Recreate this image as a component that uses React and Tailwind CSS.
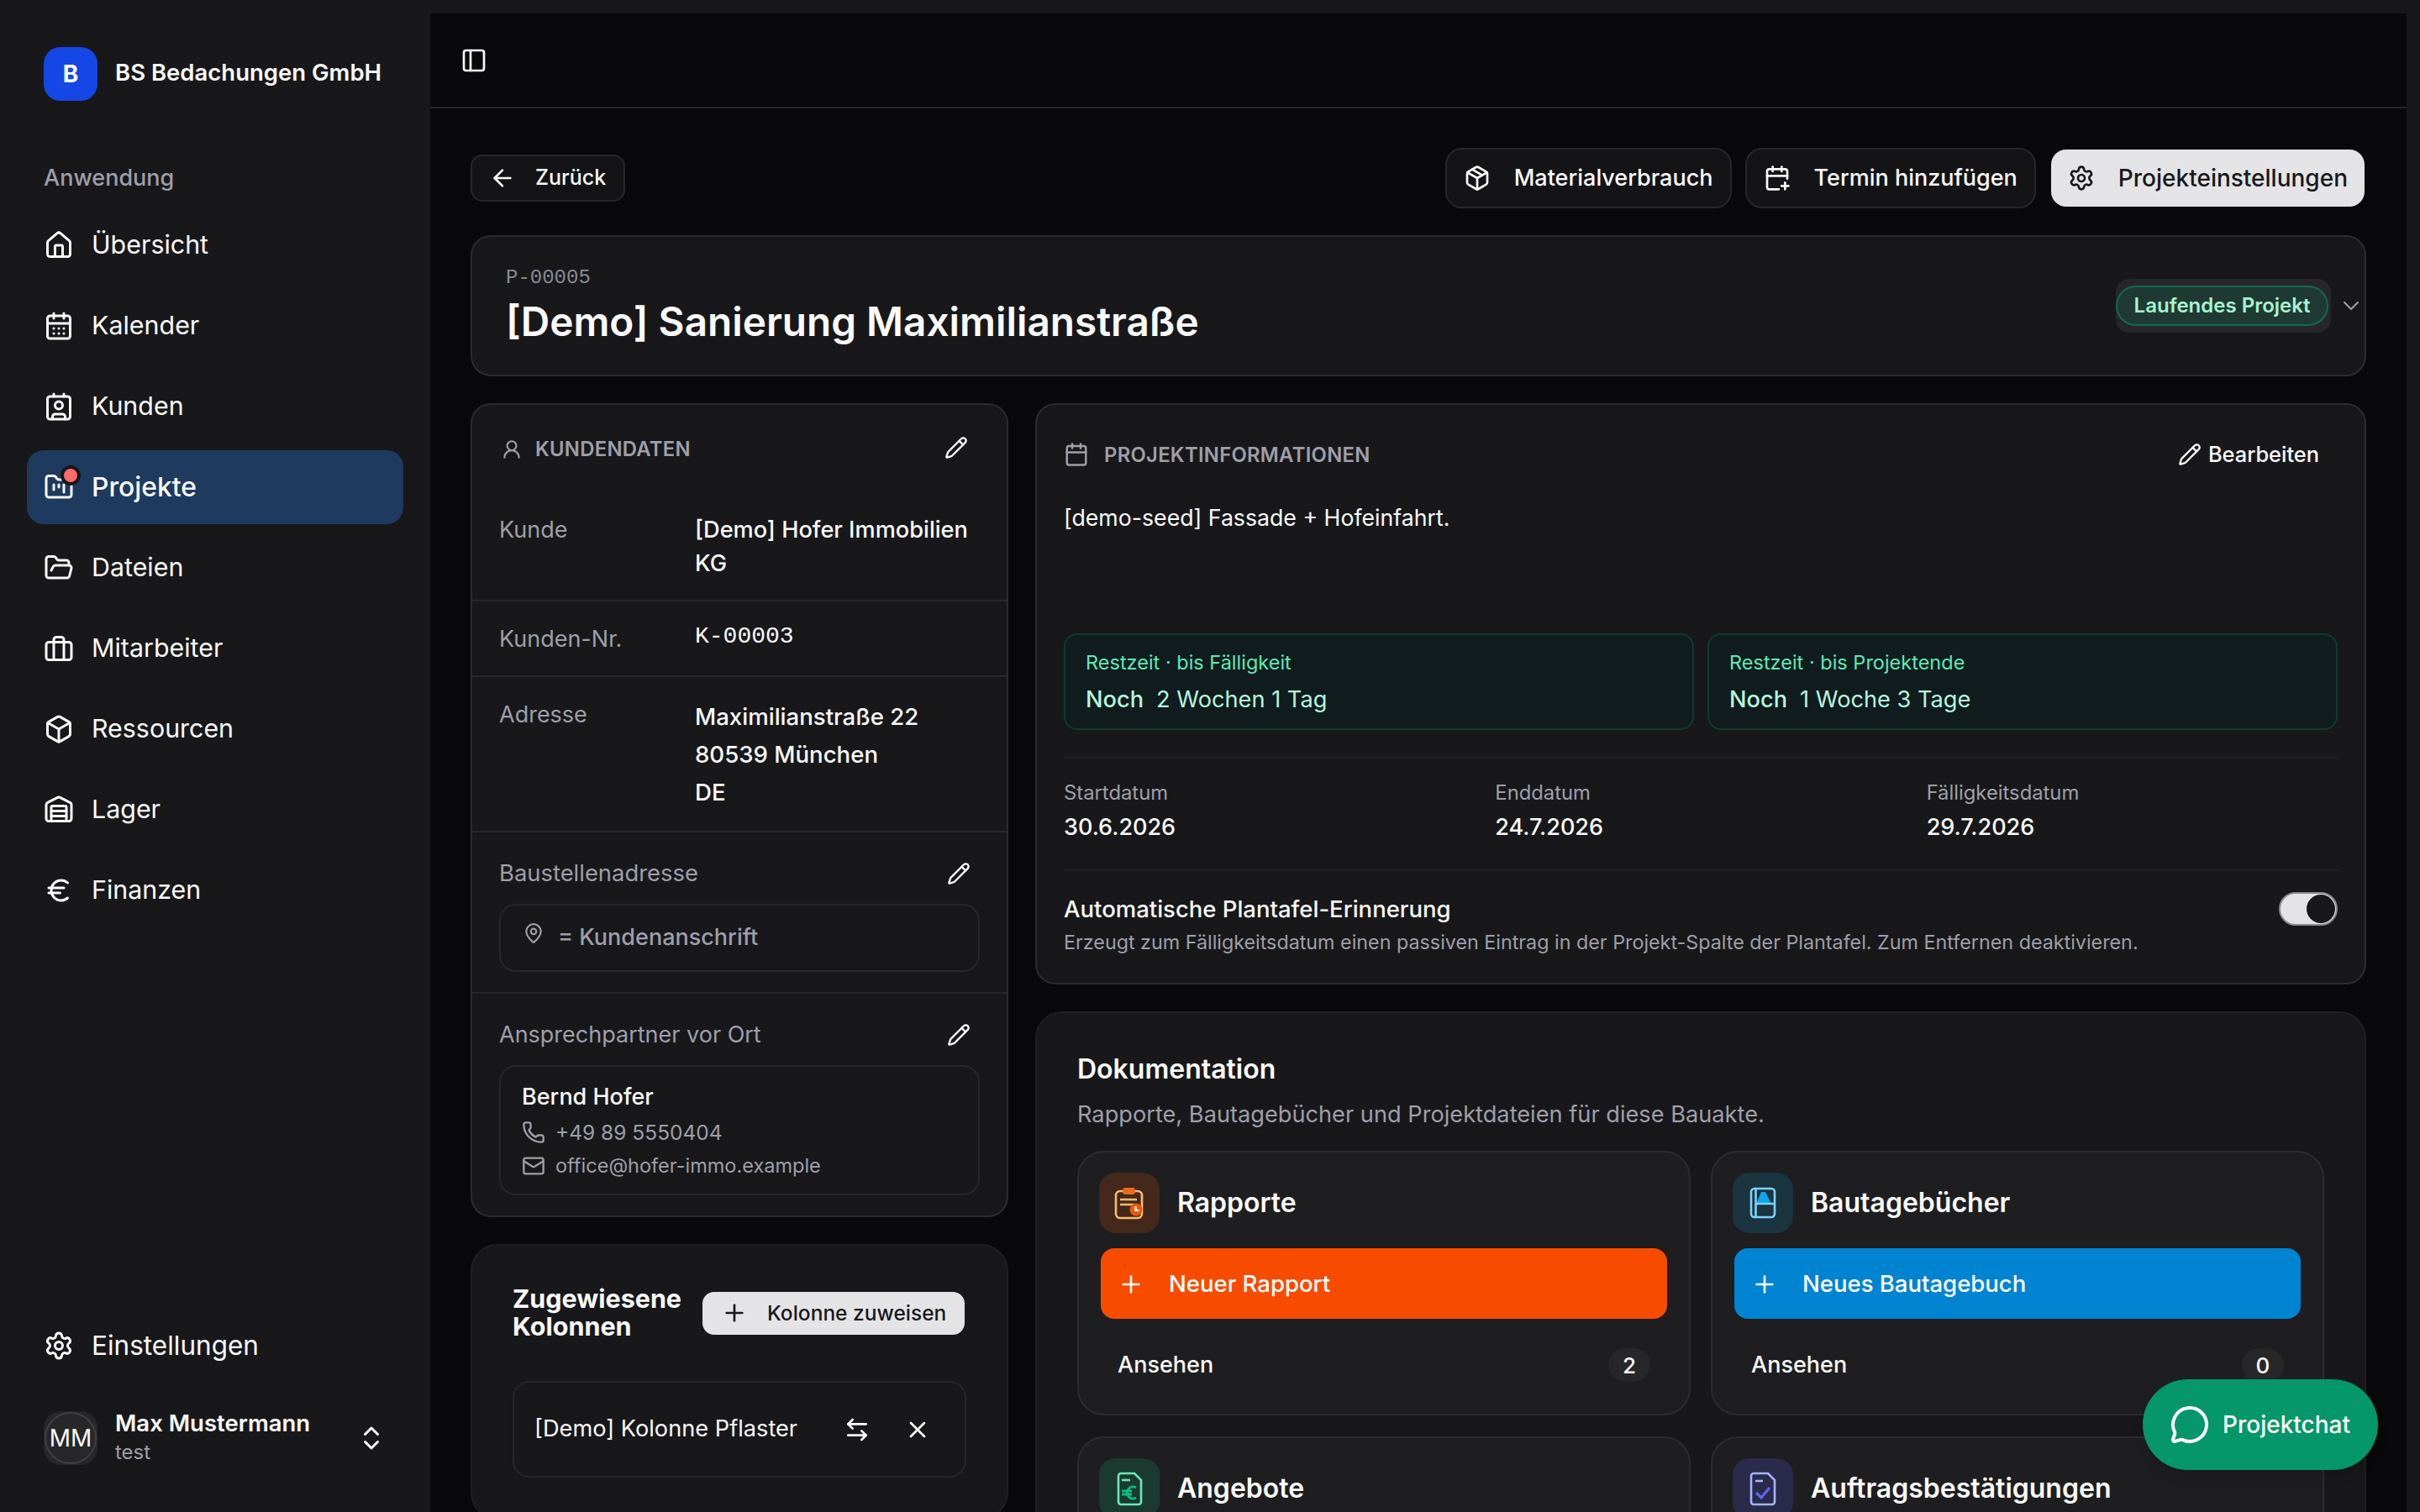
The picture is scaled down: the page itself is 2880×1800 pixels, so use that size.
import {
  ArrowLeft, ArrowLeftRight, Box, Calendar, CalendarDays, CalendarPlus, ChevronDown, ChevronsUpDown,
  Contact, Euro, FolderKanban, FolderOpen, House, Mail, MapPin, MessageCircle, Package, PanelLeft,
  Pencil, Phone, Plus, Settings, UserRound, Warehouse, X,
} from "lucide-react";

function Staff({ size = 36 }) {
  return (
    <svg width={size} height={size} viewBox="0 0 24 24" fill="none" stroke="currentColor" strokeWidth="2" strokeLinecap="round" strokeLinejoin="round">
      <rect x="2" y="7" width="20" height="14" rx="2" />
      <path d="M16 21V5a2 2 0 0 0-2-2h-4a2 2 0 0 0-2 2v16" />
    </svg>
  );
}

const NAV = [
  { label: "Übersicht", icon: House },
  { label: "Kalender", icon: CalendarDays },
  { label: "Kunden", icon: Contact },
  { label: "Projekte", icon: FolderKanban, active: true },
  { label: "Dateien", icon: FolderOpen },
  { label: "Mitarbeiter", icon: Staff },
  { label: "Ressourcen", icon: Box },
  { label: "Lager", icon: Warehouse },
  { label: "Finanzen", icon: Euro },
];

function NavItem({ label, icon: Icon, active, textSize = "text-[30.4px]" }) {
  return (
    <div className={`flex h-[88px] items-center gap-[21px] rounded-[20px] pl-[20px] text-[#fafafa] ${active ? "bg-[#1e3a5f] text-[31.8px] font-medium" : textSize}`}>
      <span className="relative flex">
        <Icon size={36} />
        {active && <span className="absolute -top-[8px] left-[20px] box-content h-4 w-4 rounded-full border-[4px] border-[#18181b] bg-[#f96a6a]" />}
      </span>
      {label}
    </div>
  );
}

function Sidebar() {
  return (
    <aside className="flex h-full w-[512px] shrink-0 flex-col">
      <div className="flex items-center gap-[21px] pl-[52px] pt-[56px]">
        <div className="flex h-16 w-16 items-center justify-center rounded-[20px] bg-[#1447e6] text-[28px] font-bold text-white">B</div>
        <div className="-mt-[2px] text-[27.5px] font-semibold text-[#fafafa]">BS Bedachungen GmbH</div>
      </div>
      <div className="mt-[76px] h-8 pl-[52px] text-[27px] font-medium leading-8 text-[#9f9fa9]">Anwendung</div>
      <nav className="mt-[20px] flex flex-col gap-2 px-8">
        {NAV.map((n) => (
          <NavItem key={n.label} {...n} />
        ))}
      </nav>
      <div className="mt-auto px-8">
        <NavItem label="Einstellungen" icon={Settings} textSize="text-[31.5px]" />
      </div>
      <div className="mb-[56px] mt-[34px] flex h-16 items-center pl-[52px] pr-[52px]">
        <div className="flex h-16 w-16 items-center justify-center rounded-[20px] bg-[#27272a]">
          <div className="flex h-[62px] w-[62px] items-center justify-center rounded-full border-2 border-[#3f3f46] text-[28px] text-[#fafafa]">MM</div>
        </div>
        <div className="ml-[21px] flex-1 pb-[1px]">
          <div className="-mt-[2px] mb-[1px] text-[27.5px] font-semibold leading-[36px] text-[#fafafa]">Max Mustermann</div>
          <div className="text-[24px] leading-[32px] text-[#9f9fa9]">test</div>
        </div>
        <ChevronsUpDown size={36} className="text-[#fafafa]" />
      </div>
    </aside>
  );
}

function TopButton({ icon: Icon, children, light }) {
  return (
    <button className={`flex h-[72px] items-center gap-[28px] rounded-[20px] border-2 px-[20px] font-medium ${light ? "border-transparent bg-[#e4e4e7] bg-clip-padding text-[28px] text-[#18181b]" : "border-[#27272a] bg-[#141416] text-[27px] text-[#fafafa]"}`}>
      <Icon size={32} />
      {children}
    </button>
  );
}

function Row({ label, children }) {
  return (
    <div className="flex border-b-2 border-[#27272a] px-8 pb-[23px] pt-[25px]">
      <div className="w-[233px] shrink-0 text-[27px] leading-10 text-[#9f9fa9]">{label}</div>
      <div className="flex-1 text-[27.2px] font-medium leading-10 text-[#fafafa]">{children}</div>
    </div>
  );
}

function CustomerCard() {
  return (
    <section className="rounded-[24px] border-2 border-[#2c2c30] bg-[#18181b]">
      <div className="flex h-[104px] items-center px-[34px] pt-[1px]">
        <UserRound size={26} className="text-[#9f9fa9]" />
        <span className="ml-[15px] text-[23.8px] font-semibold uppercase tracking-[0.3px] text-[#9f9fa9]">Kundendaten</span>
        <Pencil size={28} className="-mt-[3px] ml-auto mr-[12px] text-[#fafafa]" />
      </div>
      <Row label="Kunde">[Demo] Hofer Immobilien KG</Row>
      <Row label="Kunden-Nr.">
        <div className="-mt-[3px] h-10 font-['Liberation_Mono',monospace] text-[28px] font-normal">K-00003</div>
      </Row>
      <Row label="Adresse">
        <div className="text-[27.6px] leading-[45px]">
          Maximilianstraße 22
          <br />
          80539 München
          <br />
          DE
        </div>
      </Row>
      <div className="border-b-2 border-[#27272a] px-8 pb-6 pt-[29px]">
        <div className="flex h-10 items-center justify-between pr-[11px] text-[27.4px] text-[#9f9fa9]">
          Baustellenadresse
          <Pencil size={28} className="text-[#fafafa]" />
        </div>
        <div className="mt-4 flex h-[81px] items-center gap-[16px] rounded-[20px] border-2 border-[#27272a] pl-[26px] text-[27px] font-medium text-[#9f9fa9]">
          <MapPin size={26} className="-mt-[12px]" />
          = Kundenanschrift
        </div>
      </div>
      <div className="px-8 pb-6 pt-[29px]">
        <div className="flex h-10 items-center justify-between pr-[11px] text-[27px] text-[#9f9fa9]">
          Ansprechpartner vor Ort
          <Pencil size={28} className="text-[#fafafa]" />
        </div>
        <div className="mt-4 h-[155px] rounded-[20px] border-2 border-[#27272a] pl-[25px] pt-[16px]">
          <div className="text-[27px] font-medium leading-10 text-[#fafafa]">Bernd Hofer</div>
          <div className="mt-[2px] flex h-[40px] items-center gap-[12px] text-[24.5px] text-[#9f9fa9]">
            <Phone size={28} />
            +49 89 5550404
          </div>
          <div className="flex h-[40px] items-center gap-[12px] text-[23.5px] text-[#9f9fa9]">
            <Mail size={28} />
            office@hofer-immo.example
          </div>
        </div>
      </div>
    </section>
  );
}

function ColumnsCard() {
  return (
    <section className="mt-8 rounded-[32px] border-2 border-[#1f1f22] bg-[#18181b] px-[48px] pb-12 pt-[46px]">
      <div className="flex items-center justify-between">
        <h3 className="w-[210px] text-[30.5px] font-bold leading-[33px] text-[#fafafa]">Zugewiesene Kolonnen</h3>
        <button className="mr-[2px] mt-[2px] flex h-[51px] w-[312px] items-center gap-[23px] rounded-[14px] bg-[#e4e4e7] pl-[22px] text-[24.5px] font-medium text-[#18181b]">
          <Plus size={32} />
          Kolonne zuweisen
        </button>
      </div>
      <div className="mt-[49px] flex h-[115px] items-center rounded-[20px] border-2 border-[#27272a] pl-[24px] pr-[40px] text-[27.2px] text-[#fafafa]">
        <span>[Demo] Kolonne Pflaster</span>
        <ArrowLeftRight size={32} className="ml-auto" />
        <X size={32} className="ml-[40px]" />
      </div>
    </section>
  );
}

function Countdown({ label, value }) {
  return (
    <div className="h-[115px] rounded-[16px] border-2 border-[#0e3b30] bg-[#111c1e] pl-[24px] pt-[15px]">
      <div className="text-[23.5px] leading-9 text-[#5ee9b5]">{label}</div>
      <div className="mt-[6px] text-[27.2px] leading-10 text-[#b6f5dc]">
        <span className="font-medium">Noch</span>
        <span className="ml-[15px]">{value}</span>
      </div>
    </div>
  );
}

function DateCol({ label, value }) {
  return (
    <div>
      <div className="text-[23.8px] leading-9 text-[#9f9fa9]">{label}</div>
      <div className="mt-[3px] text-[27px] font-medium leading-10 text-[#fafafa]">{value}</div>
    </div>
  );
}

function InfoCard() {
  return (
    <section className="h-[692px] rounded-[24px] border-2 border-[#2c2c30] bg-[#18181b] px-[32px] pt-[39px]">
      <div className="flex h-10 items-center">
        <Calendar size={30} className="text-[#9f9fa9]" />
        <span className="ml-[18px] mt-[2px] text-[23.8px] font-semibold uppercase tracking-[0.3px] text-[#9f9fa9]">Projektinformationen</span>
        <div className="ml-auto mr-[22px] flex items-center gap-[8px] text-[25.4px] font-medium text-[#fafafa]">
          <Pencil size={28} />
          Bearbeiten
        </div>
      </div>
      <p className="mt-[35px] h-[158px] text-[26.7px] leading-10 text-[#fafafa]">[demo-seed] Fassade + Hofeinfahrt.</p>
      <div className="grid grid-cols-2 gap-4">
        <Countdown label="Restzeit · bis Fälligkeit" value="2 Wochen 1 Tag" />
        <Countdown label="Restzeit · bis Projektende" value="1 Woche 3 Tage" />
      </div>
      <div className="mt-[32px] grid grid-cols-3 gap-6 border-y-2 border-[#222225] pb-[30px] pt-[23px]">
        <DateCol label="Startdatum" value="30.6.2026" />
        <DateCol label="Enddatum" value="24.7.2026" />
        <DateCol label="Fälligkeitsdatum" value="29.7.2026" />
      </div>
      <div className="mt-[25px] flex items-start justify-between">
        <div>
          <div className="text-[27.5px] font-medium leading-10 text-[#fafafa]">Automatische Plantafel-Erinnerung</div>
          <div className="mt-[2px] text-[23.3px] leading-9 text-[#9f9fa9]">
            Erzeugt zum Fälligkeitsdatum einen passiven Eintrag in der Projekt-Spalte der Plantafel. Zum Entfernen deaktivieren.
          </div>
        </div>
        <div className="flex h-10 w-[70px] shrink-0 items-center justify-end rounded-full border-2 border-[#8a8a90] bg-[#e4e4e7] pr-[1px]">
          <div className="h-[34px] w-[34px] rounded-full bg-[#18181b]" />
        </div>
      </div>
    </section>
  );
}

function ReportIcon() {
  return (
    <svg width="42" height="42" viewBox="0 0 42 42" fill="none">
      <rect x="5" y="7" width="31" height="32" rx="5" stroke="#fdba74" strokeWidth="2.6" />
      <rect x="13" y="3" width="15" height="8" rx="3" fill="#ea6c1a" />
      <path d="M10 17h20M10 23h16" stroke="#fdba74" strokeWidth="2.6" />
      <circle cx="29" cy="29" r="7.5" fill="#ea580c" />
      <path d="M28.5 25v5h4" stroke="#fff" strokeWidth="2.2" />
    </svg>
  );
}

function BookIcon() {
  return (
    <svg width="42" height="42" viewBox="0 0 42 42" fill="none">
      <path d="M19 8l-6 14h18L24 8z" fill="#0ea5e9" />
      <rect x="7" y="4" width="28" height="34" rx="4" stroke="#7dd3fc" strokeWidth="2.6" />
      <path d="M12.5 4v34M12.5 22H35" stroke="#7dd3fc" strokeWidth="2.6" />
    </svg>
  );
}

function OfferIcon() {
  return (
    <svg width="42" height="42" viewBox="0 0 42 42" fill="none">
      <path d="M27 3H11a3 3 0 0 0-3 3v31a3 3 0 0 0 3 3h21a3 3 0 0 0 3-3V11z" stroke="#6ee7b7" strokeWidth="2.6" />
      <path d="M12 11h10" stroke="#6ee7b7" strokeWidth="2.6" />
      <path d="M29 20a7 7 0 1 0 0 12M12 24h12M12 28h12" stroke="#10b981" strokeWidth="3" />
    </svg>
  );
}

function ConfirmIcon() {
  return (
    <svg width="42" height="42" viewBox="0 0 42 42" fill="none">
      <path d="M27 3H10a3 3 0 0 0-3 3v31a3 3 0 0 0 3 3h22a3 3 0 0 0 3-3V11z" stroke="#a5b4fc" strokeWidth="2.6" />
      <path d="M12 12h9" stroke="#a5b4fc" strokeWidth="2.6" />
      <path d="M13 26l6 6 10-12" stroke="#6366f1" strokeWidth="3.2" />
    </svg>
  );
}

function DocCard({ title, action, count, icon: Icon, iconBg, btn }) {
  return (
    <div className="h-[315px] rounded-[32px] border-2 border-[#2c2c30] bg-[#1e1e21] p-6">
      <div className="flex items-center gap-[21px]">
        <div className={`flex h-[72px] w-[72px] items-center justify-center rounded-[20px] ${iconBg}`}>
          <Icon />
        </div>
        <div className="text-[32px] font-semibold text-[#fafafa]">{title}</div>
      </div>
      {action && (
        <>
          <button className={`mx-[2px] mt-[18px] flex h-[84px] w-[674px] items-center gap-[29px] rounded-[16px] pl-[20px] pt-[2px] text-[27.5px] font-medium text-white ${btn}`}>
            <Plus size={32} />
            {action}
          </button>
          <div className="mt-[35px] flex h-10 items-center justify-between pl-[22px] pr-[22px] text-[27px] font-medium text-[#fafafa]">
            Ansehen
            <span className="flex h-10 w-[50px] items-center justify-center rounded-full bg-[#27272a] text-[26px]">{count}</span>
          </div>
        </>
      )}
    </div>
  );
}

function DocsCard() {
  return (
    <section className="mt-8 rounded-[32px] border-2 border-[#1f1f22] bg-[#18181b] px-12 pb-12 pt-[47px]">
      <h2 className="text-[32px] font-semibold leading-10 text-[#fafafa]">Dokumentation</h2>
      <p className="mt-[14px] text-[27.2px] leading-10 text-[#9f9fa9]">Rapporte, Bautagebücher und Projektdateien für diese Bauakte.</p>
      <div className="mt-[23px] grid grid-cols-2 gap-x-6 gap-y-[25px]">
        <DocCard title="Rapporte" action="Neuer Rapport" count="2" icon={ReportIcon} iconBg="bg-[#43281b]" btn="bg-[#f74c00]" />
        <DocCard title="Bautagebücher" action="Neues Bautagebuch" count="0" icon={BookIcon} iconBg="bg-[#1a3440]" btn="bg-[#0084d1]" />
        <DocCard title="Angebote" icon={OfferIcon} iconBg="bg-[#1a3a30]" />
        <DocCard title="Auftragsbestätigungen" icon={ConfirmIcon} iconBg="bg-[#2a2a4a]" />
      </div>
    </section>
  );
}

export default function App() {
  return (
    <div className="relative flex h-screen overflow-hidden bg-[#18181b] font-['Inter','Noto_Sans',sans-serif]">
      <Sidebar />
      <main className="mr-4 mt-4 min-w-0 flex-1 overflow-hidden bg-[#09090b]">
        <header className="flex h-[113px] items-center border-b-2 border-[#27272a] pl-[36px] text-[#fafafa]">
          <PanelLeft size={32} />
        </header>
        <div className="px-12 pt-[47px]">
          <div className="flex items-center justify-between">
            <button className="flex h-14 w-[184px] items-center gap-[23px] rounded-[14px] border-2 border-[#27272a] bg-[#141416] pl-[20px] text-[25px] font-medium text-[#fafafa]">
              <ArrowLeft size={32} />
              Zurück
            </button>
            <div className="flex gap-4">
              <TopButton icon={Package}>Materialverbrauch</TopButton>
              <TopButton icon={CalendarPlus}>Termin hinzufügen</TopButton>
              <TopButton icon={Settings} light>Projekteinstellungen</TopButton>
            </div>
          </div>
          <section className="mt-8 flex h-[168px] items-center justify-between rounded-[24px] border-2 border-[#2c2c30] bg-[#18181b] pl-[40px]">
            <div className="pb-[3px]">
              <div className="font-['Liberation_Mono',monospace] text-[24px] leading-8 text-[#8a8a93]">P-00005</div>
              <h1 className="mt-[8px] text-[47.7px] font-semibold leading-[56px] text-[#fafafa]">[Demo] Sanierung Maximilianstraße</h1>
            </div>
            <div className="flex items-center">
              <div className="flex h-16 w-[256px] items-center rounded-[16px] bg-[#27272a]">
                <span className="flex h-12 w-[253px] items-center justify-center rounded-full border-2 border-[#14694e] bg-[#1f3a33] text-[24px] font-semibold text-[#a7f3d0]">Laufendes Projekt</span>
              </div>
              <ChevronDown size={32} strokeWidth={1.5} className="ml-[8px] text-[#9f9fa9]" />
            </div>
          </section>
          <div className="mt-8 flex gap-8">
            <div className="w-[640px] shrink-0">
              <CustomerCard />
              <ColumnsCard />
            </div>
            <div className="min-w-0 flex-1">
              <InfoCard />
              <DocsCard />
            </div>
          </div>
        </div>
      </main>
      <div className="absolute left-[2550px] top-[1642px] flex h-[108px] w-[280px] items-center gap-[15px] rounded-full bg-[#059669] pl-[32px] text-[28px] font-medium text-white shadow-lg">
        <MessageCircle size={48} />
        Projektchat
      </div>
    </div>
  );
}
